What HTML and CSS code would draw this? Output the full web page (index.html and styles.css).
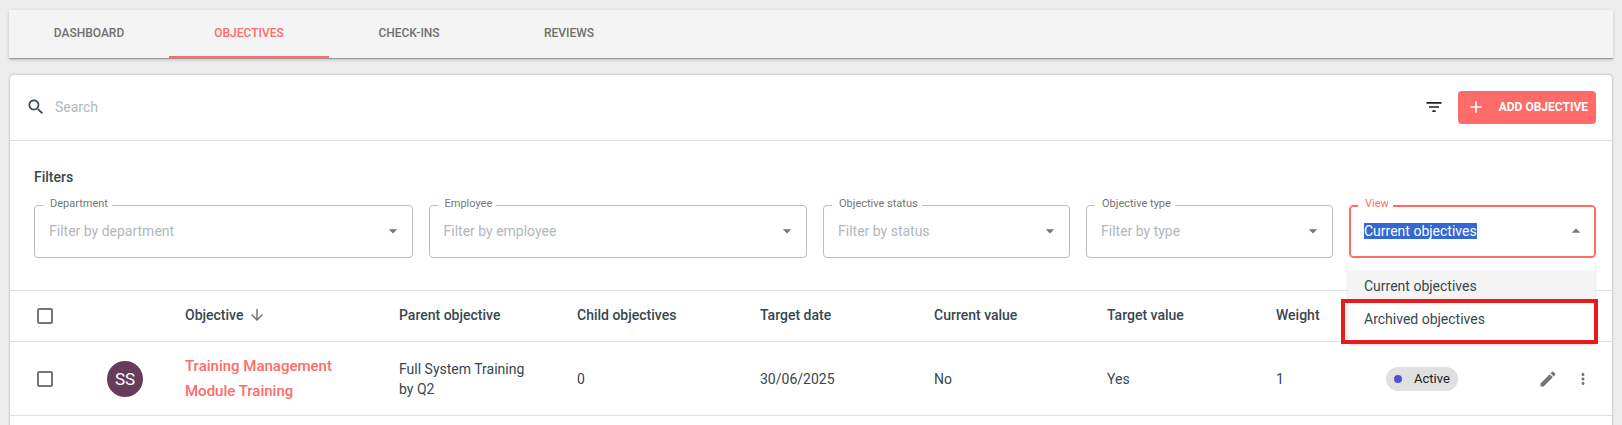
FILE: index.html
```html
<!DOCTYPE html>
<html lang="en">
<head>
<meta charset="utf-8">
<title>Objectives</title>
<link rel="stylesheet" href="styles.css">
</head>
<body>
<nav class="tabs">
  <a class="tab" href="#dashboard">DASHBOARD</a>
  <a class="tab tab-active" href="#objectives" aria-current="page">OBJECTIVES</a>
  <a class="tab" href="#check-ins">CHECK-INS</a>
  <a class="tab" href="#reviews">REVIEWS</a>
</nav>

<main class="card">
  <div class="toolbar">
    <label class="search">
      <svg class="icon" viewBox="0 0 24 24" aria-hidden="true"><path d="M15.5 14h-.79l-.28-.27C15.41 12.59 16 11.11 16 9.5 16 5.91 13.09 3 9.5 3S3 5.91 3 9.5 5.91 16 9.5 16c1.61 0 3.09-.59 4.23-1.57l.27.28v.79l5 4.99L20.49 19l-4.99-5zm-6 0C7.01 14 5 11.99 5 9.5S7.01 5 9.5 5 14 7.01 14 9.5 11.99 14 9.5 14z"/></svg>
      <input class="search-input" type="text" placeholder="Search" aria-label="Search">
    </label>
    <button class="icon-button filter-button" type="button" aria-label="Toggle filters">
      <svg class="icon" viewBox="0 0 24 24" aria-hidden="true"><path d="M10 18h4v-2h-4v2zM3 6v2h18V6H3zm3 7h12v-2H6v2z"/></svg>
    </button>
    <button class="add-button" type="button">
      <svg class="icon" viewBox="0 0 24 24" aria-hidden="true"><path d="M19 13h-6v6h-2v-6H5v-2h6V5h2v6h6v2z"/></svg>
      ADD OBJECTIVE
    </button>
  </div>

  <section class="filters">
    <h2 class="filters-title">Filters</h2>
    <div class="filters-grid">
      <div class="field field-wide">
        <label class="field-label" for="department">Department</label>
        <input class="field-input" id="department" type="text" role="combobox" aria-expanded="false" placeholder="Filter by department">
        <svg class="icon caret" viewBox="0 0 24 24" aria-hidden="true"><path d="M7 10l5 5 5-5z"/></svg>
      </div>
      <div class="field field-wide">
        <label class="field-label" for="employee">Employee</label>
        <input class="field-input" id="employee" type="text" role="combobox" aria-expanded="false" placeholder="Filter by employee">
        <svg class="icon caret" viewBox="0 0 24 24" aria-hidden="true"><path d="M7 10l5 5 5-5z"/></svg>
      </div>
      <div class="field">
        <label class="field-label" for="status">Objective status</label>
        <input class="field-input" id="status" type="text" role="combobox" aria-expanded="false" placeholder="Filter by status">
        <svg class="icon caret" viewBox="0 0 24 24" aria-hidden="true"><path d="M7 10l5 5 5-5z"/></svg>
      </div>
      <div class="field">
        <label class="field-label" for="type">Objective type</label>
        <input class="field-input" id="type" type="text" role="combobox" aria-expanded="false" placeholder="Filter by type">
        <svg class="icon caret" viewBox="0 0 24 24" aria-hidden="true"><path d="M7 10l5 5 5-5z"/></svg>
      </div>
      <div class="field field-focused">
        <label class="field-label" for="view">View</label>
        <input class="field-input" id="view" type="text" role="combobox" aria-expanded="true" aria-controls="view-options" value="Current objectives">
        <svg class="icon caret" viewBox="0 0 24 24" aria-hidden="true"><path d="M7 14l5-5 5 5z"/></svg>
        <ul class="menu" id="view-options" role="listbox" aria-label="View">
          <li class="option option-selected" role="option" aria-selected="true">Current objectives</li>
          <li class="option option-marked" role="option" aria-selected="false">Archived objectives</li>
        </ul>
      </div>
    </div>
  </section>

  <table class="table">
    <colgroup>
      <col class="col-check"><col class="col-avatar"><col class="col-objective"><col class="col-parent"><col class="col-child"><col class="col-date"><col class="col-current"><col class="col-target"><col class="col-weight"><col class="col-status"><col class="col-actions">
    </colgroup>
    <thead>
      <tr>
        <th class="cell-check"><input class="checkbox" type="checkbox" aria-label="Select all objectives"></th>
        <th></th>
        <th><span class="sort">Objective <svg class="icon sort-icon" viewBox="0 0 24 24" aria-hidden="true"><path d="M20 12l-1.41-1.41L13 16.17V4h-2v12.17l-5.58-5.59L4 12l8 8 8-8z"/></svg></span></th>
        <th>Parent objective</th>
        <th>Child objectives</th>
        <th>Target date</th>
        <th>Current value</th>
        <th>Target value</th>
        <th>Weight</th>
        <th></th>
        <th></th>
      </tr>
    </thead>
    <tbody>
      <tr>
        <td class="cell-check"><input class="checkbox" type="checkbox" aria-label="Select Training Management Module Training"></td>
        <td><span class="avatar">SS</span></td>
        <td><a class="objective-link" href="#objective">Training Management Module Training</a></td>
        <td>Full System Training by Q2</td>
        <td>0</td>
        <td>30/06/2025</td>
        <td>No</td>
        <td>Yes</td>
        <td>1</td>
        <td><span class="chip"><span class="chip-dot"></span>Active</span></td>
        <td>
          <div class="actions">
            <button class="icon-button" type="button" aria-label="Edit">
              <svg class="icon" viewBox="0 0 24 24" aria-hidden="true"><path d="M3 17.25V21h3.75L17.81 9.94l-3.75-3.75L3 17.25zM20.71 7.04c.39-.39.39-1.02 0-1.41l-2.34-2.34a.9959.9959 0 0 0-1.41 0l-1.83 1.83 3.75 3.75 1.83-1.83z"/></svg>
            </button>
            <button class="icon-button more-button" type="button" aria-label="More actions">
              <svg class="icon" viewBox="0 0 24 24" aria-hidden="true"><path d="M12 8c1.1 0 2-.9 2-2s-.9-2-2-2-2 .9-2 2 .9 2 2 2zm0 2c-1.1 0-2 .9-2 2s.9 2 2 2 2-.9 2-2-.9-2-2-2zm0 6c-1.1 0-2 .9-2 2s.9 2 2 2 2-.9 2-2-.9-2-2-2z"/></svg>
            </button>
          </div>
        </td>
      </tr>
      <tr class="row-next"><td colspan="11"></td></tr>
    </tbody>
  </table>
</main>
<script src="script.js"></script>
</body>
</html>
```

FILE: script.js
```js
// The open combobox starts with its value selected.
const view = document.getElementById("view");
view.focus({ preventScroll: true });
view.select();
```

FILE: styles.css
```css
* {
  box-sizing: border-box;
}

html {
  height: 100%;
  overflow: hidden;
}

body {
  display: flex;
  flex-direction: column;
  gap: 16px;
  min-height: 100%;
  margin: 0;
  padding: 10px 9px 0;
  background: #ededed;
  color: #37474f;
  font-family: Roboto, "Liberation Sans", sans-serif;
  font-size: 14px;
  line-height: 20px;
}

button,
input {
  margin: 0;
  border: 0;
  padding: 0;
  background: none;
  color: inherit;
  font: inherit;
}

input:focus {
  outline: none;
}

.icon {
  display: block;
  flex: none;
  width: 20px;
  height: 20px;
  fill: currentColor;
}

/* Tabs */
.tabs {
  display: flex;
  background: #f4f4f4;
  border-bottom: 1px solid #999;
  box-shadow: 0 1px 3px rgba(0, 0, 0, 0.2);
}

.tab {
  width: 160px;
  padding: 12px 0;
  border-bottom: 2px solid transparent;
  color: #707070;
  font-size: 12px;
  font-weight: 500;
  line-height: 22px;
  text-align: center;
  text-decoration: none;
}

.tab-active {
  border-color: #ff6b68;
  color: #ff6b68;
}

/* Card */
.card {
  flex: 1;
  margin: 0 1px;
  border-radius: 4px 4px 0 0;
  background: #fff;
  box-shadow: 0 0 2px 1px rgba(0, 0, 0, 0.14);
}

.toolbar {
  display: flex;
  align-items: center;
  padding: 16px;
  border-bottom: 1px solid #e0e0e0;
}

.search {
  display: flex;
  flex: 1;
  align-items: center;
  gap: 9px;
  padding-bottom: 2px;
}

.search-input {
  flex: 1;
}

.search-input::placeholder,
.field-input::placeholder {
  color: #b1b7ba;
  opacity: 1;
}

.icon-button {
  display: block;
  color: #757575;
}

.filter-button {
  margin-right: 14px;
  padding-bottom: 2px;
  color: #212121;
}

.add-button {
  display: flex;
  align-items: center;
  gap: 13px;
  height: 33px;
  padding: 0 8px 2px;
  border-radius: 4px;
  background: #ff6b68;
  color: #fff;
  font-size: 12px;
  font-weight: 700;
}

/* Filters */
.filters {
  padding: 24px 16px 32px 24px;
}

.filters-title {
  margin: 0 0 16px;
  font-size: 14px;
  font-weight: 500;
  line-height: 24px;
}

.filters-grid {
  display: grid;
  grid-template-columns: repeat(12, 1fr);
  gap: 16px;
}

.field {
  position: relative;
  display: flex;
  grid-column: span 2;
  align-items: center;
  padding: 0 9px 2px 14px;
  border: 1px solid #bdbdbd;
  border-radius: 4px;
}

.field-wide {
  grid-column: span 3;
}

.field-label {
  position: absolute;
  top: -9px;
  left: 8px;
  padding: 0 4px 0 7px;
  background: #fff;
  color: #757575;
  font-size: 11px;
  line-height: 14px;
}

.field-input {
  flex: 1;
  min-width: 0;
  height: 49px;
}

.field-input::selection {
  background: #3367d1;
  color: #fff;
}

.caret {
  color: #757575;
}

.field-focused {
  border-color: #ff6b68;
  box-shadow: inset 0 0 0 1px #ff6b68;
}

.field-focused .field-label {
  color: #ff6b68;
}

.menu {
  position: absolute;
  z-index: 1;
  top: 56px;
  left: -2px;
  right: 0;
  margin: 0;
  padding: 8px 0;
  border-radius: 4px;
  background: #fff;
  box-shadow: 0 1px 3px rgba(0, 0, 0, 0.16);
  list-style: none;
}

.option {
  padding: 6px 16px;
  line-height: 21px;
}

.option-selected {
  background: #f4f4f4;
}

/* Red frame that calls out the archived view */
.option-marked {
  position: relative;
}

.option-marked::after {
  content: "";
  position: absolute;
  inset: -4px -3px -8px -7px;
  border: 4px solid #e81a1a;
}

/* Table */
.table {
  width: 100%;
  border-collapse: collapse;
  border-top: 1px solid #e0e0e0;
  table-layout: fixed;
}

.col-check { width: 81px; }
.col-avatar { width: 78px; }
.col-objective { width: 214px; }
.col-parent { width: 178px; }
.col-child { width: 183px; }
.col-date { width: 174px; }
.col-current { width: 173px; }
.col-target { width: 169px; }
.col-weight { width: 110px; }
.col-status { width: 136px; }
.col-actions { width: 106px; }

.table th,
.table td {
  padding: 11px 20px 11px 16px;
  border-bottom: 1px solid #e0e0e0;
  text-align: left;
}

.table th {
  height: 51px;
  padding-bottom: 13px;
  font-weight: 500;
}

.table td {
  height: 74px;
}

.table .cell-check {
  padding: 11px 0 11px 27px;
}

.table .row-next td {
  border: 0;
}

.checkbox {
  display: block;
  width: 16px;
  height: 16px;
  border: 2px solid #757575;
  border-radius: 2px;
  appearance: none;
}

.sort {
  display: flex;
  align-items: center;
  gap: 5px;
}

.sort-icon {
  width: 18px;
  height: 18px;
  color: #757575;
}

.avatar {
  display: flex;
  align-items: center;
  justify-content: center;
  width: 36px;
  height: 36px;
  border-radius: 50%;
  background: #673b5a;
  color: #fff;
  font-size: 17px;
}

.objective-link {
  display: block;
  color: #ff6b68;
  font-size: 15px;
  font-weight: 500;
  line-height: 25px;
  text-decoration: none;
}

.chip {
  display: inline-flex;
  align-items: center;
  gap: 12px;
  height: 24px;
  padding: 0 8px;
  border-radius: 12px;
  background: #e0e0e0;
  color: #212121;
  font-size: 13px;
  vertical-align: middle;
}

.chip-dot {
  width: 8px;
  height: 8px;
  border-radius: 50%;
  background: #5350d0;
}

.actions {
  display: flex;
  align-items: center;
  justify-content: flex-end;
  gap: 16px;
}

.more-button .icon {
  width: 18px;
  height: 18px;
}
```
